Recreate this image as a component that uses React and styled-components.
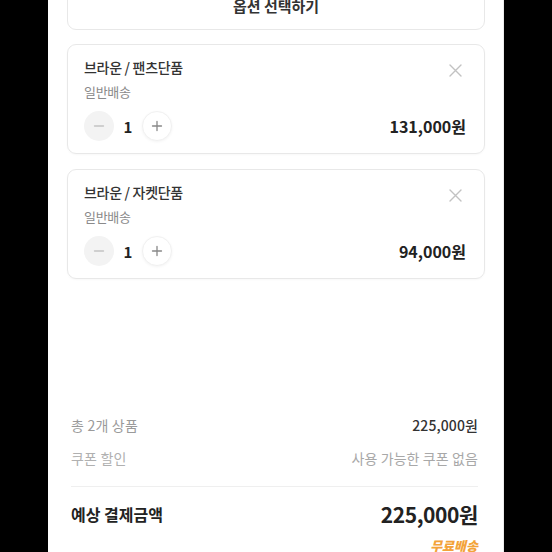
import React from 'react';
import styled, { createGlobalStyle } from 'styled-components';

const GlobalStyle = createGlobalStyle`
    html, body { margin: 0; padding: 0; background: #000; }
    body { font-family: "Noto Sans CJK KR", "Noto Sans", sans-serif; }
`;

const Page = styled.div`
    width: 456px; height: 552px; margin: 0 auto; background: #fff; overflow: hidden; border-right: 1px solid #ececec; box-sizing: border-box;
`;

const Content = styled.div`
    padding: 0 18px 0 19px; margin-top: -20px;
`;

const SelectButton = styled.button`
    display: block; width: 100%; height: 50px; padding: 0; border: 1px solid #e8e8e8; border-radius: 9px; background: #fff;
    font-family: inherit; font-size: 15px; font-weight: 700; color: #333;
`;

const CardList = styled.div`
    display: flex; flex-direction: column; gap: 15px; margin-top: 14px;
`;

const Card = styled.div`
    border: 1px solid #e8e8e8; border-radius: 9px; padding: 12px 18px 12px 16px; box-shadow: 0 1px 2px rgba(0,0,0,0.03);
`;

const TitleRow = styled.div`
    display: flex; justify-content: space-between; align-items: flex-start; height: 20px;
`;

const Title = styled.div`
    font-size: 14px; line-height: 20px; font-weight: 500; color: #333; letter-spacing: -0.3px;
`;

const Close = styled.button`
    width: 14px; height: 14px; margin-top: 6px; margin-right: 4px; padding: 0; border: 0; background: none;
    display: flex; align-items: center; justify-content: center;
`;

const Sub = styled.div`
    margin-top: 6px; font-size: 13px; line-height: 18px; color: #8a8a8a; letter-spacing: -0.3px;
`;

const BottomRow = styled.div`
    display: flex; justify-content: space-between; align-items: center; margin-top: 10px;
`;

const Stepper = styled.div`
    display: flex; align-items: center;
`;

const StepButton = styled.button`
    width: 30px; height: 30px; padding: 0; border-radius: 50%; display: flex; align-items: center; justify-content: center;
    border: ${p => p.$muted ? '0' : '1px solid #f1f1f1'};
    background: ${p => p.$muted ? '#f3f3f3' : '#fff'};
    box-shadow: ${p => p.$muted ? 'none' : '0 1px 3px rgba(0,0,0,0.05)'};
`;

const Qty = styled.span`
    width: 28px; text-align: center; font-size: 15px; font-weight: 700; color: #222;
`;

const Price = styled.span`
    font-size: 16px; font-weight: 600; color: #222; letter-spacing: 0;
`;

const Summary = styled.div`
    margin-top: 136px; padding: 0 25px 0 23px;
`;

const Row = styled.div`
    display: flex; justify-content: space-between; align-items: center; height: 20px; font-size: 14px; line-height: 20px;
    & + & { margin-top: 13px; }
`;

const Label = styled.span`
    color: ${p => p.$light ? '#b0b0b0' : '#9a9a9a'}; letter-spacing: 0.2px;
`;

const Value = styled.span`
    color: ${p => p.$light ? '#a8a8a8' : '#333'}; font-weight: ${p => p.$light ? 400 : 500}; letter-spacing: 0.1px;
`;

const Divider = styled.hr`
    margin: 18px 0 0; border: 0; border-top: 1px solid #efefef;
`;

const TotalRow = styled.div`
    display: flex; justify-content: space-between; align-items: center; margin-top: 12px; height: 30px;
`;

const TotalLabel = styled.span`
    font-size: 16px; font-weight: 700; color: #222;
`;

const TotalValue = styled.span`
    font-size: 21px; font-weight: 700; color: #222; letter-spacing: -0.4px;
`;

const Free = styled.div`
    margin-top: 8px; text-align: right; font-size: 13px; line-height: 18px; font-weight: 800; font-style: italic; color: #f3a33a;
`;

const MinusIcon = () => (
    <svg width="12" height="12" viewBox="0 0 12 12"><path d="M1.5 6h9" stroke="#c4c4c4" strokeWidth="1.3" strokeLinecap="round"/></svg>
);

const PlusIcon = () => (
    <svg width="12" height="12" viewBox="0 0 12 12"><path d="M1.5 6h9M6 1.5v9" stroke="#888" strokeWidth="1.3" strokeLinecap="round"/></svg>
);

const XIcon = () => (
    <svg width="13" height="13" viewBox="0 0 13 13"><path d="M1 1l11 11M12 1L1 12" stroke="#c2c2c2" strokeWidth="1.4" strokeLinecap="round"/></svg>
);

const items = [
    { name: '브라운 / 팬츠단품', price: '131,000원' },
    { name: '브라운 / 자켓단품', price: '94,000원' },
];

const App = () => {
    return (
        <>
            <GlobalStyle/>
            <Page>
                <Content>
                    <SelectButton>옵션 선택하기</SelectButton>
                    <CardList>
                        {items.map(item => (
                            <Card key={item.name}>
                                <TitleRow>
                                    <Title>{item.name}</Title>
                                    <Close><XIcon/></Close>
                                </TitleRow>
                                <Sub>일반배송</Sub>
                                <BottomRow>
                                    <Stepper>
                                        <StepButton $muted><MinusIcon/></StepButton>
                                        <Qty>1</Qty>
                                        <StepButton><PlusIcon/></StepButton>
                                    </Stepper>
                                    <Price>{item.price}</Price>
                                </BottomRow>
                            </Card>
                        ))}
                    </CardList>
                </Content>
                <Summary>
                    <Row><Label>총 2개 상품</Label><Value>225,000원</Value></Row>
                    <Row><Label $light>쿠폰 할인</Label><Value $light>사용 가능한 쿠폰 없음</Value></Row>
                    <Divider/>
                    <TotalRow><TotalLabel>예상 결제금액</TotalLabel><TotalValue>225,000원</TotalValue></TotalRow>
                    <Free>무료배송</Free>
                </Summary>
            </Page>
        </>
    );
};

export default App;
